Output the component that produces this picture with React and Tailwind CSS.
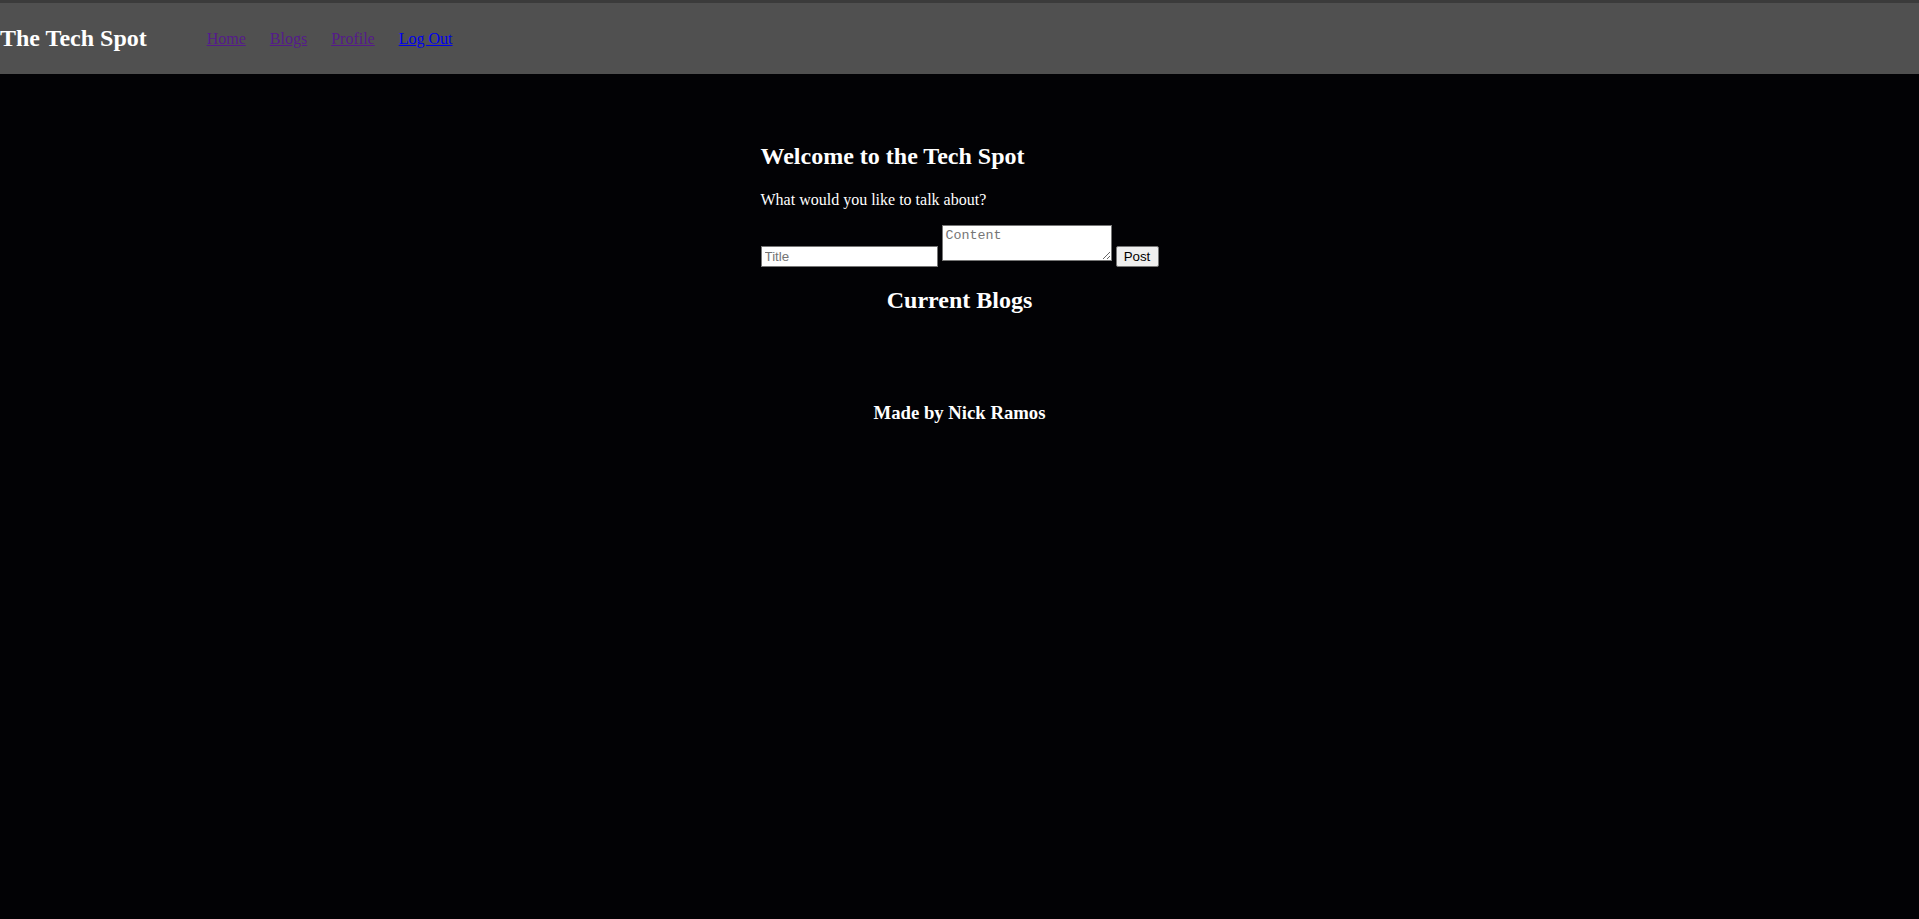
export default function App() {
  return (
    <div className="min-h-[919px] bg-[#020205] font-['Liberation_Serif',serif] text-white">
      {/* Header */}
      <header className="flex h-[74px] items-center border-t-[3px] border-[#3b3b3b] bg-[#505050]">
        <h2 className="text-[24px] font-bold leading-[27.6px]">The Tech Spot</h2>
        <nav className="ml-[60px] flex gap-[24px] text-[16px]">
          <a href="#" className="text-[#551a8b] underline">Home</a>
          <a href="#" className="text-[#551a8b] underline">Blogs</a>
          <a href="#" className="text-[#551a8b] underline">Profile</a>
          <a href="#" className="text-[#0000ee] underline">Log Out</a>
        </nav>
      </header>

      {/* Main */}
      <main className="mx-auto mt-[69px] w-fit">
        <h2 className="text-[24px] font-bold leading-[27.6px]">Welcome to the Tech Spot</h2>
        <p className="mt-[20px] text-[16px] leading-[18.4px]">What would you like to talk about?</p>

        <form className="mt-[16px] flex items-end gap-[4px]" onSubmit={(e) => e.preventDefault()}>
          <input
            type="text"
            placeholder="Title"
            className="h-[21px] w-[177px] border border-[#767676] bg-white px-[3px] font-['Liberation_Sans',sans-serif] text-[13.33px] text-black placeholder:text-[#757575] focus:outline-none"
          />
          <textarea
            placeholder="Content"
            className="mb-[6px] h-[36px] w-[170px] border border-[#767676] bg-white px-[3px] py-[2px] font-['Liberation_Mono',monospace] text-[13.33px] leading-[15px] text-black placeholder:text-[#757575] focus:outline-none"
          />
          <button
            type="submit"
            className="h-[21px] w-[43px] rounded-[2px] border border-[#767676] bg-[#efefef] font-['Liberation_Sans',sans-serif] text-[13.33px] text-black"
          >
            Post
          </button>
        </form>

        <h2 className="mt-[20px] text-center text-[24px] font-bold leading-[27.6px]">Current Blogs</h2>
      </main>

      {/* Footer */}
      <footer className="mt-[87px] text-center">
        <h3 className="text-[18.72px] font-bold leading-[21.5px]">Made by Nick Ramos</h3>
      </footer>
    </div>
  );
}
